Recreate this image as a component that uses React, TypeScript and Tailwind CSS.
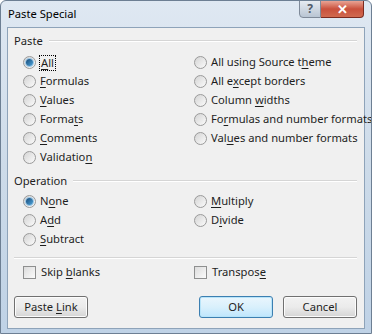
import type { ReactNode } from "react";

const font = { fontFamily: '"Noto Sans", "Open Sans", sans-serif' };

function Key({ children }: { children: ReactNode }) {
    return <span className="underline underline-offset-[2px] decoration-[1px]">{children}</span>;
}

function Radio({ checked, focus, children }: { checked?: boolean; focus?: boolean; children: ReactNode }) {
    return (
        <div className="flex items-center h-[19px] gap-[4px] whitespace-nowrap">
            <span className="w-[13px] h-[13px] rounded-full border border-[#9a9a9a] bg-gradient-to-br from-[#d4d4d4] to-[#fbfbfb] flex items-center justify-center shrink-0">
                {checked && (
                    <span className="w-[7px] h-[7px] rounded-full bg-gradient-to-br from-[#174a79] to-[#4fa6dc] ring-1 ring-[#9cc7e6]" />
                )}
            </span>
            <span className={focus ? "outline outline-1 outline-dotted outline-black px-[1px] leading-[14px]" : ""}>
                {children}
            </span>
        </div>
    );
}

function Check({ children }: { children: ReactNode }) {
    return (
        <div className="flex items-center h-[19px] gap-[5px] whitespace-nowrap">
            <span className="w-[13px] h-[13px] border border-[#8e8f8f] bg-gradient-to-br from-[#dcdcdc] to-[#fbfbfb] shrink-0" />
            <span>{children}</span>
        </div>
    );
}

function GroupHead({ label }: { label: string }) {
    return (
        <div className="flex items-center h-[16px] gap-[6px]">
            <span>{label}</span>
            <div className="flex-1 flex flex-col">
                <div className="h-px bg-[#d5d5d5]" />
                <div className="h-px bg-white" />
            </div>
        </div>
    );
}

function Button({ children, primary }: { children: ReactNode; primary?: boolean }) {
    return (
        <button
            className={
                "w-[74px] h-[22px] rounded-[3px] border flex items-center justify-center text-[#1e1e1e] whitespace-nowrap " +
                (primary
                    ? "border-[#3c7fb1] bg-gradient-to-b from-[#eaf6fd] via-[#d9f0fc] to-[#bee6fd] shadow-[inset_0_0_0_1px_#b8e4f9]"
                    : "border-[#707070] bg-gradient-to-b from-[#f2f2f2] via-[#ebebeb] to-[#d5d5d5] shadow-[inset_0_0_0_1px_#fcfcfc]")
            }
        >
            <span>{children}</span>
        </button>
    );
}

export default function App() {
    return (
        <div
            style={font}
            className="w-[372px] h-[334px] bg-gradient-to-b from-[#dfe8f2] via-[#cddbe9] to-[#bfd2e6] border border-[#6d7f93] rounded-t-[6px] flex flex-col text-[11.2px] text-[#1e1e1e] overflow-hidden"
        >
            <div className="h-[26px] flex items-start justify-between">
                <span className="pl-[7px] pt-[5px] text-black">Paste Special</span>
                <div className="flex mr-[7px] -mt-px">
                    <div className="w-[22px] h-[18px] rounded-bl-[4px] border border-[#7f8a99] bg-gradient-to-b from-[#e6ebf1] to-[#b9c5d3] flex items-center justify-center text-[#4f5a68] text-[12px] font-bold leading-none">
                        ?
                    </div>
                    <div className="w-[43px] h-[18px] rounded-br-[4px] border border-l-0 border-[#7a2a1f] bg-gradient-to-b from-[#e8a394] via-[#c9503c] to-[#d06a50] flex items-center justify-center text-white text-[13px] font-bold leading-none">
                        ✕
                    </div>
                </div>
            </div>

            <div className="mx-[6px] h-[302px] bg-[#f0f0f0] border border-[#8ea3b9] pl-[6px] pr-[7px] pt-[5px]">
                <GroupHead label="Paste" />
                <div className="grid grid-cols-[171px_1fr] pl-[9px] mt-[4px]">
                    <div className="flex flex-col">
                        <Radio checked focus><Key>A</Key>ll</Radio>
                        <Radio><Key>F</Key>ormulas</Radio>
                        <Radio><Key>V</Key>alues</Radio>
                        <Radio>Forma<Key>t</Key>s</Radio>
                        <Radio><Key>C</Key>omments</Radio>
                        <Radio>Validatio<Key>n</Key></Radio>
                    </div>
                    <div className="flex flex-col">
                        <Radio>All using Source t<Key>h</Key>eme</Radio>
                        <Radio>All e<Key>x</Key>cept borders</Radio>
                        <Radio>Column <Key>w</Key>idths</Radio>
                        <Radio>Fo<Key>r</Key>mulas and number formats</Radio>
                        <Radio>Val<Key>u</Key>es and number formats</Radio>
                    </div>
                </div>

                <div className="mt-[6px]">
                    <GroupHead label="Operation" />
                </div>
                <div className="grid grid-cols-[171px_1fr] pl-[9px] mt-[3px]">
                    <div className="flex flex-col">
                        <Radio checked>N<Key>o</Key>ne</Radio>
                        <Radio>A<Key>d</Key>d</Radio>
                        <Radio><Key>S</Key>ubtract</Radio>
                    </div>
                    <div className="flex flex-col">
                        <Radio><Key>M</Key>ultiply</Radio>
                        <Radio>D<Key>i</Key>vide</Radio>
                    </div>
                </div>

                <div className="mt-[8px] flex flex-col">
                    <div className="h-px bg-[#d5d5d5]" />
                    <div className="h-px bg-white" />
                </div>
                <div className="grid grid-cols-[171px_1fr] pl-[9px] mt-[4px]">
                    <Check>Skip <Key>b</Key>lanks</Check>
                    <Check>Transpos<Key>e</Key></Check>
                </div>

                <div className="flex mt-[14px]">
                    <Button>Paste <Key>L</Key>ink</Button>
                    <div className="flex-1" />
                    <Button primary>OK</Button>
                    <div className="w-[10px]" />
                    <Button>Cancel</Button>
                </div>
            </div>
        </div>
    );
}
